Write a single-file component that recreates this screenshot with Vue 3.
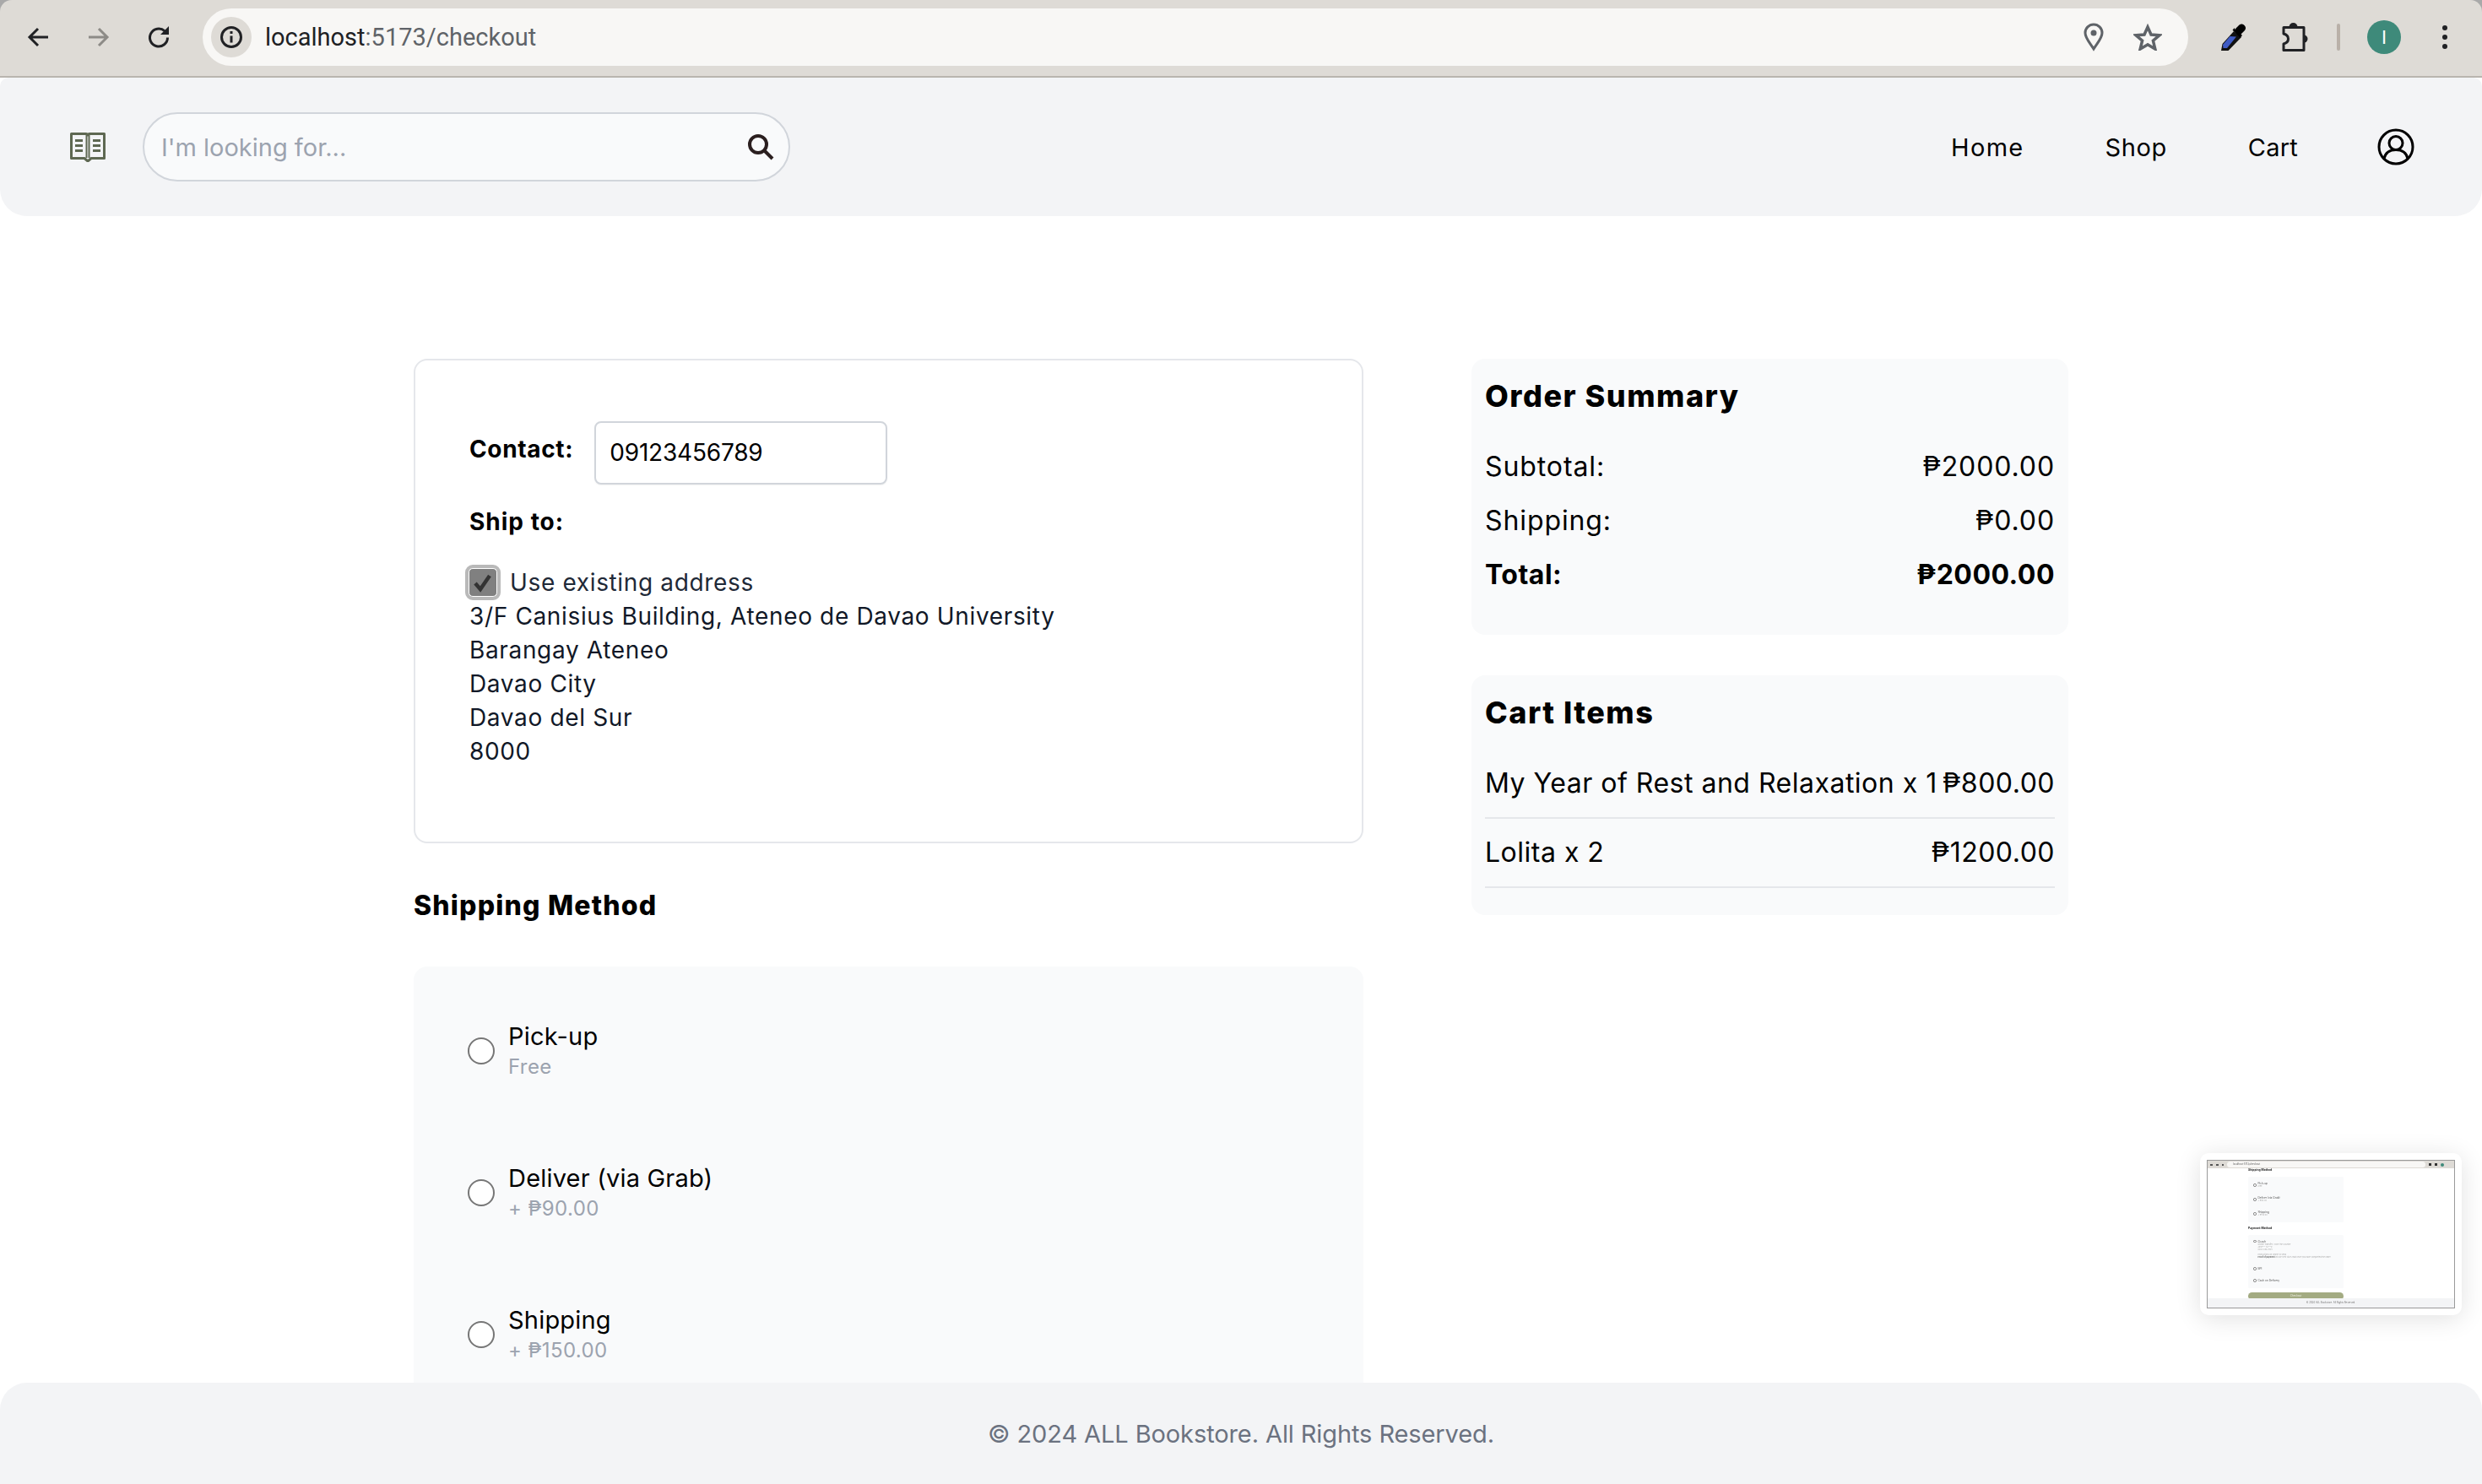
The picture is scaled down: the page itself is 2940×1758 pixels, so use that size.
<script setup>
const addressLines = [
  '3/F Canisius Building, Ateneo de Davao University',
  'Barangay Ateneo',
  'Davao City',
  'Davao del Sur',
  '8000',
]
const shippingOptions = [
  { name: 'Pick-up', note: 'Free' },
  { name: 'Deliver (via Grab)', note: '+ ₱90.00' },
  { name: 'Shipping', note: '+ ₱150.00' },
]
const navLinks = ['Home', 'Shop', 'Cart']
const cartItems = [
  { name: 'My Year of Rest and Relaxation x 1', price: '₱800.00' },
  { name: 'Lolita x 2', price: '₱1200.00' },
]
</script>

<template>
  <div class="window">
    <div class="chrome-wrap">
      <div class="chrome">
        <div class="chrome-nav">
          <svg width="26" height="26" viewBox="0 0 26 26" fill="none" stroke="#202124" stroke-width="3"><path d="M25 13H3M13 3L3 13l10 10" /></svg>
          <svg width="26" height="26" viewBox="0 0 26 26" fill="none" stroke="#8d8b87" stroke-width="3"><path d="M1 13h22M13 3l10 10-10 10" /></svg>
          <svg width="26" height="26" viewBox="0 0 26 26" fill="none" stroke="#202124" stroke-width="3">
            <path d="M22.500 13.500a10.500 10.500 0 1 1-3.500-7.800" />
            <path d="M24 0v10H14z" fill="#202124" stroke="none" />
          </svg>
        </div>
        <div class="url-pill">
          <span class="info-chip">
            <svg width="28" height="28" viewBox="0 0 28 28" fill="none" stroke="#202124" stroke-width="3"><circle cx="14" cy="14" r="11.500" /><path d="M14 12.500v8M14 7v3" /></svg>
          </span>
          <span class="url"><span class="url-host">localhost</span>:5173/checkout</span>
          <span class="url-icons">
            <svg width="24" height="34" viewBox="0 0 24 34" fill="none" stroke="#5f6368" stroke-width="3"><path d="M12 31C7 23 2 18 2 12a10 10 0 0 1 20 0C22 18 17 23 12 31z" /><circle cx="12" cy="12" r="3.500" fill="#5f6368" stroke="none" /></svg>
            <svg width="34" height="32" viewBox="0 0 34 32" fill="none" stroke="#5f6368" stroke-width="3.500"><path d="M17 4l4 9 10 .8-7.600 6.400 2.400 9.800-8.800-5.200L8.200 30l2.400-9.800L3 13.800l10-.8z" /></svg>
          </span>
        </div>
        <div class="chrome-tools">
          <svg class="dropper" width="30" height="32" viewBox="0 0 30 32">
            <path d="M15 9L1.500 24 0 32h8.500L24 16z" fill="#111" />
            <path d="M10.500 15l7.500 .5L7 29H2.500L2 25z" fill="#3f5bc4" />
            <path d="M16 7l3-3 2.500-2.500c2-1.500 4-1.500 6 .5s2 4 .5 6L25 11l-1.500 1.500 1.500 1.500-2.500 2.500L13.500 7.500 16 5z" fill="#000" />
          </svg>
          <svg width="34" height="34" viewBox="0 2 34 34" fill="none" stroke="#202124" stroke-width="3">
            <path d="M3 7.500H27V34.500H3V27C7 26 8.500 24 8.500 21S7 16 3 15z" stroke-linejoin="round" />
            <path d="M9.500 7a5 5 0 0 1 10 0z" fill="#202124" stroke="none" />
            <path d="M27 16.500a4.500 4.500 0 0 1 0 9z" fill="#202124" stroke="none" />
          </svg>
          <span class="tool-sep"></span>
          <span class="avatar">I</span>
          <svg width="8" height="28" viewBox="0 0 8 28" fill="#202124"><circle cx="4" cy="3" r="3" /><circle cx="4" cy="14" r="3" /><circle cx="4" cy="25" r="3" /></svg>
        </div>
      </div>
    </div>

    <header class="site-header">
      <svg class="logo" width="42" height="36" viewBox="0 0 42 36" fill="none">
        <path d="M19 2.500c1 0 1.500 .5 2 1.500 .5-1 1-1.500 2-1.500h17.500v29H25L21 35l-4-3.500H1.500v-29z" stroke="#5e6852" stroke-width="3" stroke-linejoin="round" />
        <path d="M19.500 3v28M22.500 3v28" stroke="#5e6852" stroke-width="2" />
        <path d="M6 10.500h9M6 16.500h9M6 22.500h9M27 10.500h9M27 16.500h9M27 22.500h9" stroke="#5e6852" stroke-width="3" />
      </svg>
      <div class="search">
        <span class="search-placeholder">I'm looking for...</span>
        <svg width="32" height="32" viewBox="0 0 32 32" fill="none" stroke="#2b1f1f" stroke-width="4"><circle cx="13" cy="13" r="10" /><path d="M20 20l10 10" /></svg>
      </div>
      <nav class="site-nav">
        <a v-for="link in navLinks" :key="link">{{ link }}</a>
        <svg width="44" height="44" viewBox="0 0 44 44" fill="none" stroke="#000" stroke-width="3"><circle cx="22" cy="22" r="20" /><circle cx="22" cy="17.500" r="8" /><path d="M8 36c1.500-7 7-10.500 14-10.500S34.500 29 36 36" /></svg>
      </nav>
    </header>

    <main class="page">
      <div class="checkout">
        <div class="col-left">
          <section class="contact-card">
            <div class="contact-row">
              <span class="strong-label">Contact:</span>
              <div class="contact-input">09123456789</div>
            </div>
            <div class="strong-label ship-to">Ship to:</div>
            <label class="existing">
              <span class="checkbox">
                <svg width="24" height="24" viewBox="0 0 24 24" fill="none" stroke="#333" stroke-width="4.500"><path d="M3 13l6 7L20 4" /></svg>
              </span>
              Use existing address
            </label>
            <div v-for="line in addressLines" :key="line" class="address-line">{{ line }}</div>
          </section>

          <h2 class="section-title">Shipping Method</h2>
          <section class="method-card">
            <div v-for="option in shippingOptions" :key="option.name" class="method">
              <span class="radio"></span>
              <div class="method-text">
                <div class="method-name">{{ option.name }}</div>
                <div class="method-note">{{ option.note }}</div>
              </div>
            </div>
          </section>
        </div>

        <div class="col-right">
          <section class="summary-card">
            <h3 class="card-title">Order Summary</h3>
            <div class="sum-row"><span>Subtotal:</span><span>₱2000.00</span></div>
            <div class="sum-row"><span>Shipping:</span><span>₱0.00</span></div>
            <div class="sum-row sum-total"><span>Total:</span><span>₱2000.00</span></div>
          </section>
          <section class="items-card">
            <h3 class="card-title">Cart Items</h3>
            <div v-for="item in cartItems" :key="item.name" class="item-row">
              <span>{{ item.name }}</span><span>{{ item.price }}</span>
            </div>
          </section>
        </div>
      </div>
    </main>

    <footer class="site-footer">© 2024 ALL Bookstore. All Rights Reserved.</footer>

    <!-- screenshot preview floating in the corner -->
    <div class="shot-preview">
      <div class="shot">
        <div class="shot-bar">
          <span class="shot-nav"></span>
          <span class="shot-pill">localhost:5173/checkout</span>
          <span class="shot-tool"></span>
          <span class="shot-tool"></span>
          <span class="shot-dot"></span>
        </div>
        <div class="shot-body">
          <div class="shot-title">Shipping Method</div>
          <div class="shot-card shot-ship">
            <div class="shot-opt"><i></i><div>Pick-up<small>Free</small></div></div>
            <div class="shot-opt"><i></i><div>Deliver (via Grab)<small>+ ₱90.00</small></div></div>
            <div class="shot-opt"><i></i><div>Shipping<small>+ ₱150.00</small></div></div>
          </div>
          <div class="shot-title shot-pay-title">Payment Method</div>
          <div class="shot-card shot-pay">
            <div class="shot-opt shot-gcash"><i></i><div>Gcash<small>Online Transfer / Over the Counter</small><small>Jose*** M***Z</small><small>0923 456 7891</small><small class="gap">Instructions on where to send</small><small><b>Proof of payment</b> will be sent via e-mail once you have completed the order</small></div></div>
            <div class="shot-opt shot-bpi"><i></i><div>BPI</div></div>
            <div class="shot-opt shot-cod"><i></i><div>Cash on Delivery</div></div>
          </div>
          <div class="shot-btn">Checkout</div>
        </div>
        <div class="shot-foot">© 2024 ALL Bookstore. All Rights Reserved.</div>
      </div>
    </div>
  </div>
</template>

<style>
html, body { margin: 0; background: #fff; }
</style>

<style scoped>
.window {
  position: relative;
  width: 2940px;
  height: 1758px;
  display: flex;
  flex-direction: column;
  overflow: hidden;
  background: #fff;
  color: #000;
  font-family: Inter, "Noto Sans", sans-serif;
}

/* browser toolbar */
.chrome-wrap {
  flex: none;
  background: #a9a9a9;
}
.chrome {
  height: 88px;
  padding-bottom: 2px;
  border-bottom: 2px solid #b9b5af;
  background: #dedbd6;
  display: flex;
  align-items: center;
  border-radius: 14px 14px 0 0;
}
.chrome-nav {
  flex: none;
  display: flex;
  align-items: center;
  gap: 46px;
  padding-left: 32px;
  width: 240px;
  box-sizing: border-box;
}
.url-pill {
  flex: none;
  width: 2352px;
  height: 68px;
  box-sizing: border-box;
  border-radius: 34px;
  background: #f8f7f5;
  display: flex;
  align-items: center;
  padding: 0 31px 0 10px;
}
.info-chip {
  width: 48px;
  height: 48px;
  border-radius: 50%;
  background: #dedbd6;
  display: flex;
  align-items: center;
  justify-content: center;
}
.url {
  margin-left: 16px;
  font-family: Roboto, sans-serif;
  font-size: 29px;
  color: #5f6368;
}
.url-host { color: #202124; }
.url-icons {
  margin-left: auto;
  display: flex;
  align-items: center;
  gap: 35px;
}
.chrome-tools {
  display: flex;
  align-items: center;
  margin-left: 39px;
}
.dropper { margin-right: 41px; }
.tool-sep {
  width: 4px;
  height: 32px;
  margin: 0 32px 0 32px;
  background: #b9b0a8;
  border-radius: 2px;
}
.avatar {
  width: 40px;
  height: 40px;
  border-radius: 50%;
  background: #3e8a7a;
  color: #fff;
  font-family: Roboto, sans-serif;
  font-size: 22px;
  display: flex;
  align-items: center;
  justify-content: center;
  margin-right: 48px;
}

/* site header */
.site-header {
  flex: none;
  height: 164px;
  background: #f3f4f6;
  border-radius: 10px 10px 32px 32px;
  display: flex;
  align-items: center;
  padding: 0 80px 0 83px;
}
.logo { margin-right: 44px; }
.search {
  width: 767px;
  height: 82px;
  box-sizing: border-box;
  border: 2px solid #d1d5db;
  border-radius: 41px;
  background: #f9fafb;
  display: flex;
  align-items: center;
  justify-content: space-between;
  padding: 0 17px 0 20px;
}
.search-placeholder {
  color: #9ca3af;
  font-size: 29px;
}
.site-nav {
  margin-left: auto;
  display: flex;
  align-items: center;
  font-size: 29px;
  letter-spacing: 0.6px;
}
.site-nav a { margin-right: 96px; }
.site-nav a:nth-child(1) { letter-spacing: 1.3px; }
.site-nav a:nth-child(3) { letter-spacing: 0.2px; margin-right: 94px; }

/* page */
.page {
  flex: 1;
  min-height: 0;
  overflow: hidden;
}
.checkout {
  display: flex;
  align-items: flex-start;
  gap: 128px;
  padding: 169px 0 0 490px;
}
.col-left { width: 1125px; }
.col-right {
  width: 707px;
  display: flex;
  flex-direction: column;
  gap: 48px;
}

.contact-card {
  height: 574px;
  box-sizing: border-box;
  border: 2px solid #e5e7eb;
  border-radius: 16px;
  padding: 72px 64px 0;
  font-size: 28px;
  letter-spacing: 0.65px;
}
.contact-row {
  display: flex;
  align-items: flex-start;
  gap: 25px;
}
.strong-label {
  font-weight: 700;
  font-size: 28px;
  line-height: 40px;
}
.contact-row .strong-label { margin-top: 13px; }
.ship-to { margin-top: 24px; letter-spacing: 1px; }
.contact-input {
  width: 347px;
  height: 75px;
  box-sizing: border-box;
  border: 2px solid #d1d5db;
  border-radius: 8px;
  background: #fff;
  padding: 0 16px;
  line-height: 71px;
  font-size: 28px;
  letter-spacing: -0.2px;
  box-shadow: 0 1px 2px rgba(0, 0, 0, 0.05);
}
.existing {
  display: flex;
  align-items: center;
  margin-top: 32px;
  height: 40px;
  color: #1f2937;
}
.checkbox {
  width: 34px;
  height: 34px;
  margin: 0 15px 0 -1px;
  border: 1px solid #fff;
  outline: 4px solid #b9b9b9;
  border-radius: 5px;
  background: #808080;
  display: flex;
  align-items: center;
  justify-content: center;
  box-sizing: border-box;
  flex: none;
}
.address-line {
  line-height: 40px;
  color: #111827;
}
.section-title {
  margin: 54px 0 52px;
  font-size: 32px;
  line-height: 40px;
  font-weight: 800;
  letter-spacing: 1.2px;
}
.method-card {
  background: #f9fafb;
  border-radius: 16px;
  padding: 64px;
}
.method {
  display: flex;
  align-items: center;
  gap: 16px;
  height: 72px;
  margin-bottom: 96px;
}
.radio {
  width: 32px;
  height: 32px;
  box-sizing: border-box;
  border: 2px solid #767676;
  border-radius: 50%;
  background: #fff;
  flex: none;
}
.method-text { padding-bottom: 2px; }
.method-name {
  font-size: 29px;
  line-height: 40px;
  letter-spacing: 0.2px;
}
.method-note {
  font-size: 24px;
  line-height: 32px;
  color: #9ca3af;
  letter-spacing: 0.4px;
}

.summary-card, .items-card {
  background: #f9fafb;
  border-radius: 16px;
  padding: 16px;
  box-sizing: border-box;
}
.summary-card { height: 327px; }
.items-card { height: 284px; }
.card-title {
  margin: 0 0 32px;
  font-size: 36px;
  line-height: 56px;
  font-weight: 800;
  letter-spacing: 1.5px;
}
.sum-row {
  display: flex;
  justify-content: space-between;
  font-size: 32px;
  line-height: 48px;
  margin-bottom: 16px;
  letter-spacing: 0.9px;
}
.sum-total { font-weight: 700; letter-spacing: 0.5px; }
.item-row {
  display: flex;
  justify-content: space-between;
  font-size: 32px;
  line-height: 48px;
  padding-bottom: 16px;
  margin-bottom: 16px;
  border-bottom: 2px solid #e5e7eb;
  letter-spacing: 0.5px;
}

.site-footer {
  flex: none;
  height: 120px;
  box-sizing: border-box;
  background: #f3f4f6;
  border-radius: 32px 32px 0 0;
  color: #6b7280;
  font-size: 29px;
  letter-spacing: -0.1px;
  display: flex;
  align-items: center;
  justify-content: center;
}

/* floating screenshot thumbnail */
.shot-preview {
  position: absolute;
  left: 2606px;
  top: 1366px;
  width: 310px;
  height: 192px;
  box-sizing: border-box;
  padding: 8px;
  background: #fff;
  border-radius: 10px;
  box-shadow: 0 4px 30px rgba(0, 0, 0, 0.12);
}
.shot {
  width: 294px;
  height: 176px;
  box-sizing: border-box;
  border: 1px solid #9a9a9a;
  display: flex;
  flex-direction: column;
  overflow: hidden;
  background: #fff;
  filter: blur(0.5px);
  color: #333;
  font-size: 3.2px;
}
.shot-bar {
  height: 9px;
  flex: none;
  background: #dedbd6;
  display: flex;
  align-items: center;
  gap: 4px;
  padding: 0 4px 0 3px;
}
.shot-nav {
  flex: none;
  width: 16px;
  height: 2px;
  background: repeating-linear-gradient(90deg, #555 0 3px, transparent 3px 7px);
}
.shot-pill {
  flex: none;
  width: 235px;
  box-sizing: border-box;
  height: 7px;
  border-radius: 3.500px;
  background: #f8f7f5;
  font-size: 2.8px;
  line-height: 7px;
  padding-left: 7px;
  color: #555;
}
.shot-tool {
  flex: none;
  width: 3px;
  height: 3px;
  background: #333;
}
.shot-dot {
  flex: none;
  width: 4px;
  height: 4px;
  border-radius: 50%;
  background: #3e8a7a;
}
.shot-body {
  flex: 1;
  min-height: 0;
  overflow: hidden;
  padding-left: 48px;
  width: 113px;
}
.shot-title {
  font-size: 3.4px;
  font-weight: 700;
  color: #222;
  line-height: 5px;
  margin-bottom: 5px;
}
.shot-card {
  background: #f9fafb;
  box-sizing: border-box;
  border-radius: 1.5px;
  padding: 0 6px;
  color: #555;
}
.shot-ship { height: 54px; padding-top: 6.500px; }
.shot-opt {
  display: flex;
  align-items: center;
  gap: 2px;
  height: 7px;
  margin-bottom: 10px;
}
.shot-opt i {
  width: 3.500px;
  height: 3.500px;
  box-sizing: border-box;
  flex: none;
  border: 0.4px solid #777;
  border-radius: 50%;
  background: #fff;
}
.shot-opt small {
  display: block;
  font-size: 2.4px;
  line-height: 3.200px;
  color: #aaa;
  white-space: nowrap;
}
.shot-opt small b { color: #666; }
.shot-pay-title { margin-top: 4.500px; }
.shot-pay { height: 63px; padding-top: 6px; }
.shot-gcash { height: 22px; margin-bottom: 10px; align-items: flex-start; }
.shot-gcash small.gap { margin-top: 3px; }
.shot-bpi { height: 5px; margin-bottom: 9px; }
.shot-cod { height: 5px; }
.shot-btn {
  margin-top: 5px;
  height: 9px;
  border-radius: 4.500px;
  background: #a3ab82;
  color: #eef0e4;
  text-align: center;
  font-size: 3px;
  line-height: 9px;
}
.shot-foot {
  height: 11px;
  flex: none;
  background: #f3f4f6;
  color: #777;
  text-align: center;
  font-size: 2.8px;
  line-height: 11px;
}
</style>
